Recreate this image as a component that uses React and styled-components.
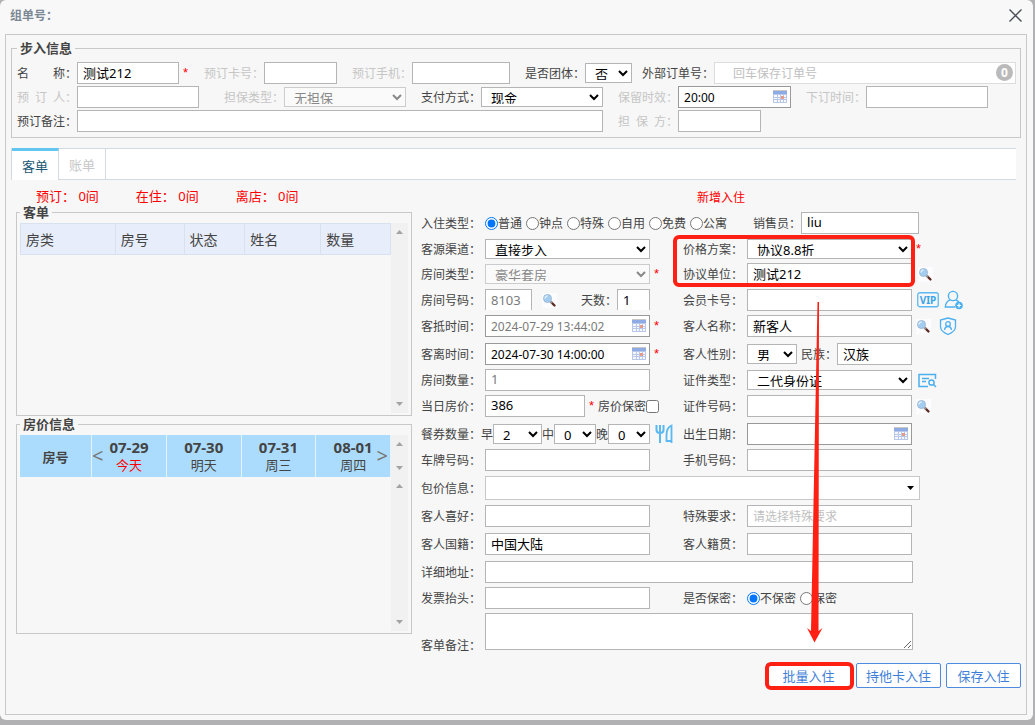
import React from "react";
import styled, { createGlobalStyle } from "styled-components";

const GUEST_COLUMNS = [
  { name: "房类", width: 95 },
  { name: "房号", width: 69 },
  { name: "状态", width: 61 },
  { name: "姓名", width: 76 },
  { name: "数量", width: 70 },
];

const PRICE_DAYS = [
  { date: "07-29", day: "今天", today: true },
  { date: "07-30", day: "明天" },
  { date: "07-31", day: "周三" },
  { date: "08-01", day: "周四" },
];

const STAY_TYPES = ["普通", "钟点", "特殊", "自用", "免费", "公寓"];

const SearchIcon = () => (
  <svg width="15" height="15" viewBox="0 0 15 15" aria-hidden="true">
    <rect width="15" height="15" fill="#fcfcfe" />
    <path d="M9 9L12.500 12.500" stroke="#5e2a22" strokeWidth="2.4" strokeLinecap="round" />
    <path d="M8 8l2 2" stroke="#9a9a9a" strokeWidth="2" />
    <circle cx="5.5" cy="5.5" r="4" fill="#a4ccef" stroke="#9dbbd8" strokeWidth="1" />
    <path d="M3 5.5a2.6 2.6 0 0 1 2.6-2.6" fill="none" stroke="#e6f3fd" strokeWidth="1.4" />
  </svg>
);

const CalendarIcon = () => (
  <svg width="14" height="13" viewBox="0 0 14 13" aria-hidden="true">
    <rect width="14" height="13" fill="#b9c8e8" />
    <rect x="0" y="0" width="14" height="1" fill="#c9c6c4" />
    <rect x="0" y="1" width="14" height="3" fill="#8eabe6" />
    <path d="M1 5h3v2H1zM5 5h2v2H5zM8 5h2v2H8zM11 5h2v2h-2zM1 8h3v1H1zM5 8h2v1H5zM11 8h2v1h-2zM1 10h3v2H1zM5 10h2v2H5zM8 10h2v2H8zM11 10h2v2h-2z" fill="#f6f8fd" />
    <rect x="8" y="6" width="3" height="3" fill="#e89a88" />
  </svg>
);

const ForkKnifeIcon = () => (
  <svg width="19" height="20" viewBox="0 0 19 20" fill="none" stroke="#5bb8f0" aria-hidden="true">
    <path d="M1.500 1v5q0 3 3.500 3t3.500-3V1M5 1v18" strokeWidth="2" />
    <path d="M16.500 19V1.500q-5 2-5 10V17h5" strokeWidth="1.800" />
  </svg>
);

const VipIcon = () => (
  <svg width="22" height="16" viewBox="0 0 22 16" aria-hidden="true">
    <rect x="0.750" y="0.750" width="20.500" height="14" rx="2" fill="none" stroke="#5bb8f0" strokeWidth="1.300" />
    <text x="11" y="11.500" textAnchor="middle" fontSize="10" fontWeight="700" fontFamily="Noto Sans, sans-serif" fill="#3aa5ea">
      VIP
    </text>
  </svg>
);

const AddMemberIcon = () => (
  <svg width="20" height="20" viewBox="0 0 20 20" fill="none" stroke="#4bb0f0" strokeWidth="1.400" aria-hidden="true">
    <circle cx="9" cy="6" r="4.600" />
    <path d="M6 9.800C3 11 1.500 13.500 1.300 17H11M12 9.800l3 2" />
    <circle cx="15" cy="15.500" r="3.800" fill="#4bb0f0" stroke="none" />
    <path d="M15 13.500v4M13 15.500h4" stroke="#fff" strokeWidth="1.200" />
  </svg>
);

const ShieldIcon = () => (
  <svg width="18" height="18" viewBox="0 0 18 18" fill="none" stroke="#4bb0f0" strokeWidth="1.300" aria-hidden="true">
    <path d="M9 1L16.500 3v6.500q0 5-7.500 8Q1.500 14.500 1.500 9.500V3z" />
    <circle cx="9" cy="7" r="2.300" />
    <path d="M5.500 13q.4-3.500 3.500-3.500t3.500 3.500" />
  </svg>
);

const IdCardIcon = () => (
  <svg width="19" height="15" viewBox="0 0 19 15" fill="none" stroke="#4bb0f0" strokeWidth="1.500" aria-hidden="true">
    <path d="M10 13.500H1V1.500h16.500V6M4 5.500h7M4 8.500h4" />
    <circle cx="13.500" cy="9.500" r="2.600" />
    <path d="M15.500 11.500l2.500 2.500" />
  </svg>
);

function ScrollTrack() {
  return (
    <Track aria-hidden="true">
      <svg width="7" height="4" viewBox="0 0 7 4">
        <path d="M0 4L3.500 0L7 4z" fill="#a3a3a3" />
      </svg>
      <svg width="7" height="4" viewBox="0 0 7 4">
        <path d="M0 0L3.500 4L7 0z" fill="#a3a3a3" />
      </svg>
    </Track>
  );
}

/** Text box with a calendar picker button at its right end. */
function DateField({ id, value = "", width = 165, muted = false }) {
  return (
    <DateBox $width={width}>
      <TextInput id={id} defaultValue={value} $size={12} $dark $muted={muted} />
      <PickerButton type="button" aria-label="选择日期">
        <CalendarIcon />
      </PickerButton>
    </DateBox>
  );
}

function LookupButton({ label = "查找" }) {
  return (
    <IconButton type="button" aria-label={label}>
      <SearchIcon />
    </IconButton>
  );
}

function WalkInInfo() {
  return (
    <Group>
      <Legend>步入信息</Legend>
      <Rows>
        <Row>
          <Label htmlFor="name">名　　称：</Label>
          <TextInput id="name" defaultValue="测试212" $width={102} />
          <NameMark>*</NameMark>
          <Label htmlFor="bookCard" $off>预订卡号：</Label>
          <TextInput id="bookCard" $width={73} />
          <Space $width={15} />
          <Label htmlFor="bookPhone" $off>预订手机：</Label>
          <TextInput id="bookPhone" $width={98} />
          <Space $width={15} />
          <Label htmlFor="isGroup">是否团体：</Label>
          <Select id="isGroup" $width={47}><option>否</option></Select>
          <Space $width={10} />
          <Label htmlFor="outerOrder">外部订单号：</Label>
          <OrderBox>
            <OrderInput id="outerOrder" placeholder="回车保存订单号" />
            <OrderCount>0</OrderCount>
          </OrderBox>
        </Row>
        <Row>
          <Label htmlFor="booker" $off>{"预\u2002订\u2002人："}</Label>
          <TextInput id="booker" $width={122} />
          <Space $width={25} />
          <Label htmlFor="guarantee" $off>担保类型：</Label>
          <Select id="guarantee" $width={122} disabled><option>无担保</option></Select>
          <Space $width={15} />
          <Label htmlFor="payment">支付方式：</Label>
          <Select id="payment" $width={122}><option>现金</option></Select>
          <Space $width={15} />
          <Label htmlFor="keepUntil" $off>保留时效：</Label>
          <DateField id="keepUntil" value="20:00" width={113} />
          <Space $width={15} />
          <Label htmlFor="bookTime" $off>下订时间：</Label>
          <TextInput id="bookTime" $width={122} />
        </Row>
        <Row>
          <Label htmlFor="bookNote">预订备注：</Label>
          <TextInput id="bookNote" $width={526} />
          <Space $width={15} />
          <Label htmlFor="guarantor" $off>{"担\u2002保\u2002方："}</Label>
          <TextInput id="guarantor" $width={83} />
        </Row>
      </Rows>
    </Group>
  );
}

function RoomPanels() {
  return (
    <Side>
      <Stats>
        <span>预订： 0间</span>
        <span>在住： 0间</span>
        <span>离店： 0间</span>
      </Stats>
      <PanelGroup>
        <Legend>客单</Legend>
        <GuestPanel>
          <GuestTable>
            <thead>
              <tr>
                {GUEST_COLUMNS.map((column) => (
                  <GuestHead key={column.name} $width={column.width}>{column.name}</GuestHead>
                ))}
              </tr>
            </thead>
          </GuestTable>
          <ScrollTrack />
        </GuestPanel>
      </PanelGroup>
      <PanelGroup>
        <Legend>房价信息</Legend>
        <PricePanel>
          <PriceHeader>
            <PriceTable>
              <thead>
                <tr>
                  <PriceHead $width={72}>房号</PriceHead>
                  {PRICE_DAYS.map(({ date, day, today }) => (
                    <PriceHead key={date} $width={75}>
                      <PriceDate>{date}</PriceDate>
                      <PriceDay $today={today}>{day}</PriceDay>
                    </PriceHead>
                  ))}
                </tr>
              </thead>
            </PriceTable>
            <PageButton type="button" $side="left">&lt;</PageButton>
            <PageButton type="button" $side="right">&gt;</PageButton>
            <ScrollTrack />
          </PriceHeader>
          <PriceBody>
            <ScrollTrack />
          </PriceBody>
        </PricePanel>
      </PanelGroup>
    </Side>
  );
}

function CheckInForm() {
  return (
    <Form>
      <NewCheckIn href="#new">新增入住</NewCheckIn>
      <FieldGrid>
        <Label as="span">入住类型：</Label>
        <Cell $span={3} $gap={4}>
          {STAY_TYPES.map((type, index) => (
            <Choice key={type}>
              <input type="radio" name="stayType" defaultChecked={index === 0} />
              <span>{type}</span>
            </Choice>
          ))}
          <SellerLabel htmlFor="seller">销售员：</SellerLabel>
          <TextInput id="seller" defaultValue="liu" $width={118} />
        </Cell>

        <Label htmlFor="channel">客源渠道：</Label>
        <Cell>
          <Select id="channel" $width={165}><option>直接步入</option></Select>
        </Cell>
        <Label htmlFor="pricePlan">价格方案：</Label>
        <Cell $gap={4}>
          <Select id="pricePlan" $width={165}><option>协议8.8折</option></Select>
          <Mark>*</Mark>
        </Cell>

        <Label htmlFor="roomType">房间类型：</Label>
        <Cell $gap={4}>
          <Select id="roomType" $width={165} disabled><option>豪华套房</option></Select>
          <Mark>*</Mark>
        </Cell>
        <Label htmlFor="company">协议单位：</Label>
        <Cell $gap={6}>
          <TextInput id="company" defaultValue="测试212" $width={165} />
          <LookupButton />
        </Cell>

        <Label htmlFor="roomNo">房间号码：</Label>
        <Cell>
          <ShortInput id="roomNo" defaultValue="8103" $width={47} $muted />
          <Space $width={10} />
          <LookupButton />
          <Space $width={24} />
          <Label htmlFor="days">天数：</Label>
          <ShortInput id="days" defaultValue="1" $width={33} />
        </Cell>
        <Label htmlFor="memberCard">会员卡号：</Label>
        <Cell $gap={5}>
          <TextInput id="memberCard" $width={165} />
          <IconButton type="button" aria-label="会员"><VipIcon /></IconButton>
          <IconButton type="button" aria-label="新增会员"><AddMemberIcon /></IconButton>
        </Cell>

        <Label htmlFor="arrive">客抵时间：</Label>
        <Cell $gap={4}>
          <DateField id="arrive" value="2024-07-29 13:44:02" muted />
          <Mark>*</Mark>
        </Cell>
        <Label htmlFor="guestName">客人名称：</Label>
        <Cell $gap={4}>
          <TextInput id="guestName" defaultValue="新客人" $width={165} />
          <LookupButton />
          <Space $width={0} />
          <IconButton type="button" aria-label="实名认证"><ShieldIcon /></IconButton>
        </Cell>

        <Label htmlFor="leave">客离时间：</Label>
        <Cell $gap={4}>
          <DateField id="leave" value="2024-07-30 14:00:00" />
          <Mark>*</Mark>
        </Cell>
        <Label htmlFor="gender">客人性别：</Label>
        <Cell>
          <Select id="gender" $width={50}><option>男</option></Select>
          <Space $width={4} />
          <Label htmlFor="nation">民族：</Label>
          <TextInput id="nation" defaultValue="汉族" $width={75} />
        </Cell>

        <Label htmlFor="roomCount">房间数量：</Label>
        <Cell>
          <TextInput id="roomCount" defaultValue="1" $width={165} $muted />
        </Cell>
        <Label htmlFor="idType">证件类型：</Label>
        <Cell $gap={6}>
          <Select id="idType" $width={165}><option>二代身份证</option></Select>
          <IconButton type="button" aria-label="读取证件"><IdCardIcon /></IconButton>
        </Cell>

        <Label htmlFor="price">当日房价：</Label>
        <Cell $gap={4}>
          <TextInput id="price" defaultValue="386" $width={100} />
          <Mark>*</Mark>
          <Choice>
            <span>房价保密</span>
            <input type="checkbox" />
          </Choice>
        </Cell>
        <Label htmlFor="idNo">证件号码：</Label>
        <Cell $gap={4}>
          <TextInput id="idNo" $width={165} />
          <LookupButton />
        </Cell>

        <Cell $span={2}>
          <Label as="span">餐券数量：</Label>
          <Label htmlFor="breakfast">早</Label>
          <Select id="breakfast" $width={49}><option>2</option></Select>
          <Label htmlFor="lunch">中</Label>
          <Select id="lunch" $width={42}><option>0</option></Select>
          <Label htmlFor="dinner">晚</Label>
          <Select id="dinner" $width={42}><option>0</option></Select>
          <Space $width={5} />
          <IconButton type="button" aria-label="餐券"><ForkKnifeIcon /></IconButton>
        </Cell>
        <Label htmlFor="birthday">出生日期：</Label>
        <Cell>
          <DateField id="birthday" />
        </Cell>

        <Label htmlFor="plate">车牌号码：</Label>
        <Cell><TextInput id="plate" $width={165} /></Cell>
        <Label htmlFor="mobile">手机号码：</Label>
        <Cell><TextInput id="mobile" $width={165} /></Cell>

        <Label htmlFor="package">包价信息：</Label>
        <Cell $span={3}>
          <PackageBox>
            <PackageSelect id="package"><option> </option></PackageSelect>
            <svg width="7" height="4" viewBox="0 0 7 4" aria-hidden="true">
              <path d="M0 0h7L3.500 4z" fill="#000" />
            </svg>
          </PackageBox>
        </Cell>

        <Label htmlFor="hobby">客人喜好：</Label>
        <Cell><TextInput id="hobby" $width={165} /></Cell>
        <Label htmlFor="request">特殊要求：</Label>
        <Cell><TextInput id="request" placeholder="请选择特殊要求" $width={165} $size={12} /></Cell>

        <Label htmlFor="country">客人国籍：</Label>
        <Cell><TextInput id="country" defaultValue="中国大陆" $width={165} /></Cell>
        <Label htmlFor="hometown">客人籍贯：</Label>
        <Cell><TextInput id="hometown" $width={165} /></Cell>

        <Label htmlFor="address">详细地址：</Label>
        <Cell $span={3}><TextInput id="address" $width={428} /></Cell>

        <Label htmlFor="invoice">发票抬头：</Label>
        <Cell><TextInput id="invoice" $width={165} /></Cell>
        <Label as="span">是否保密：</Label>
        <Cell $gap={4}>
          <Choice>
            <input type="radio" name="secret" defaultChecked />
            <span>不保密</span>
          </Choice>
          <Choice>
            <input type="radio" name="secret" />
            <span>保密</span>
          </Choice>
        </Cell>

        <NoteLabel htmlFor="note">客单备注：</NoteLabel>
        <Note id="note" />
      </FieldGrid>
      <Highlight />
      <Pointer width="18" height="341" viewBox="0 0 18 341" aria-hidden="true">
        <path d="M11.500 0H13L12.500 329L16.500 326L8.500 340.500L1 326L5 329z" fill="#ff2014" />
      </Pointer>
    </Form>
  );
}

function App() {
  return (
    <>
      <GlobalStyle />
      <Dialog>
        <Header>
          <Title>组单号：</Title>
          <CloseButton type="button" aria-label="关闭">
            <svg width="13" height="13" viewBox="0 0 13 13">
              <path d="M0.500 0.500l12 12M12.500 0.500l-12 12" stroke="#4a4d55" strokeWidth="1.400" />
            </svg>
          </CloseButton>
        </Header>
        <Frame>
          <WalkInInfo />
          <Tabs>
            <Tab type="button" $active>客单</Tab>
            <Tab type="button">账单</Tab>
          </Tabs>
          <Content>
            <RoomPanels />
            <CheckInForm />
          </Content>
          <Actions>
            <MarkedAction>
              <ActionButton type="button" $width={85}>批量入住</ActionButton>
            </MarkedAction>
            <ActionButton type="button" $width={85}>持他卡入住</ActionButton>
            <ActionButton type="button" $width={75}>保存入住</ActionButton>
          </Actions>
        </Frame>
      </Dialog>
    </>
  );
}

const GlobalStyle = createGlobalStyle`
  * {
    box-sizing: border-box;
  }

  body {
    margin: 0;
    background: #b1b1b4;
    color: #444;
    font-family: "Noto Sans", "Noto Sans CJK SC", sans-serif;
    font-size: 12px;
  }

  button, input, select, textarea {
    margin: 0;
    font-family: inherit;
  }
`;

const Dialog = styled.main`
  margin: 0 2px 4px 0;
  padding: 0 6px 5px 5px;
  border-radius: 6px;
  background: #f8f8f9;
`;

const Header = styled.header`
  display: flex;
  align-items: center;
  justify-content: space-between;
  height: 34px;
  padding: 0 5px 4px;
`;

const Title = styled.h1`
  margin: 0;
  color: #7a8794;
  font-size: 12px;
  font-weight: 700;
`;

const CloseButton = styled.button`
  display: flex;
  padding: 0;
  border: 0;
  background: none;
`;

const Frame = styled.section`
  padding: 5px 5px 26px;
  border: 1px solid #c8c8c8;
  background: #f7f7f7;
`;

const Group = styled.fieldset`
  min-width: 0;
  margin: 0;
  padding: 6px 4px 5px 5px;
  border: 1px solid #c8c8c8;
`;

const Legend = styled.legend`
  padding: 0 3px;
  font-size: 13px;
  font-weight: 700;
  line-height: 16px;
`;

const Rows = styled.div`
  display: flex;
  flex-direction: column;
  gap: 2px;
`;

const Row = styled.div`
  display: flex;
  align-items: center;
  height: 22px;
`;

const Label = styled.label`
  flex: none;
  padding-top: 2px;
  color: ${({ $off }) => ($off ? "#c6c6c6" : "#444")};
  font-size: 12px;
  line-height: 20px;
  white-space: nowrap;
`;

const Space = styled.span`
  flex: none;
  width: ${({ $width }) => $width}px;
`;

const Mark = styled.span`
  color: #f00;
  font-family: "Liberation Sans", sans-serif;
  font-size: 13px;
  line-height: 22px;
`;

const NameMark = styled(Mark)`
  width: 25px;
  padding-left: 4px;
`;

const TextInput = styled.input`
  flex: none;
  width: ${({ $width }) => ($width ? `${$width}px` : "100%")};
  height: 22px;
  padding: 0 5px ${({ $size = 13 }) => ($size === 13 ? 2 : 0)}px;
  border: 1px solid ${({ $dark }) => ($dark ? "#999" : "#b5b5b5")};
  border-radius: 0;
  background: #fff;
  color: ${({ $muted }) => ($muted ? "#7a7a7a" : "#000")};
  font-size: ${({ $size = 13 }) => $size}px;

  &::placeholder {
    color: #c0c0c0;
  }
`;

const ShortInput = styled(TextInput)`
  align-self: flex-start;
  height: 21px;
  padding-bottom: 0;
  border-bottom: 0;
`;

const Select = styled.select`
  flex: none;
  width: ${({ $width }) => $width}px;
  height: 20px;
  padding: 0 0 2px 5px;
  border: 1px solid #b5b5b5;
  border-radius: 0;
  background-color: #fff;
  color: #000;
  font-size: 13px;

  &:disabled {
    border-color: #ccc;
    background-color: #fafafa;
    color: #888;
    opacity: 1;
  }
`;

const DateBox = styled.div`
  position: relative;
  flex: none;
  width: ${({ $width }) => $width}px;
  height: 22px;
`;

const PickerButton = styled.button`
  position: absolute;
  top: 4px;
  right: 4px;
  display: flex;
  padding: 0;
  border: 0;
  background: none;
`;

const IconButton = styled.button`
  display: flex;
  flex: none;
  padding: 0;
  border: 0;
  background: none;
`;

const OrderBox = styled.div`
  position: relative;
  flex: 1;
`;

const OrderInput = styled(TextInput)`
  padding: 0 5px 0 18px;
  border-color: #ddd;
  font-size: 12px;
`;

const OrderCount = styled.span`
  position: absolute;
  top: 2px;
  right: 3px;
  width: 17px;
  height: 17px;
  border-radius: 50%;
  background: #bababa;
  color: #fff;
  font-size: 12px;
  font-weight: 700;
  line-height: 17px;
  text-align: center;
`;

const Tabs = styled.nav`
  display: flex;
  height: 32px;
  margin: 10px 5px 0 0;
  border: 1px solid #d3dae0;
  border-right: 0;
  background: #fff;
`;

const Tab = styled.button`
  width: 47px;
  height: ${({ $active }) => ($active ? 32 : 30)}px;
  margin-top: ${({ $active }) => ($active ? -1 : 0)}px;
  padding: 0;
  border: 0;
  border-top: ${({ $active }) => ($active ? "3px solid #62c6f2" : "0")};
  border-right: 1px solid #d3dae0;
  background: #fff;
  color: ${({ $active }) => ($active ? "#1b5876" : "#c8c8c8")};
  font-size: 13px;
`;

const Content = styled.div`
  display: flex;
  align-items: flex-start;
  gap: 9px;
  padding: 8px 0 0 5px;
`;

const Side = styled.div`
  flex: none;
  width: 396px;
`;

const Stats = styled.div`
  display: flex;
  gap: 37px;
  padding-left: 20px;
  color: #f00;
  font-size: 13px;
  line-height: 16px;
`;

const PanelGroup = styled(Group)`
  padding: 3px 3px 2px;
`;

const GuestPanel = styled.div`
  display: flex;
  align-items: stretch;
  height: 190px;
`;

const GuestTable = styled.table`
  flex: 1;
  align-self: flex-start;
  border-collapse: collapse;
  table-layout: fixed;
`;

const GuestHead = styled.th`
  width: ${({ $width }) => $width}px;
  height: 31px;
  padding: 0 5px;
  border: 1px solid #d8e1ee;
  background: #e7edfa;
  font-size: 14px;
  font-weight: 400;
  text-align: left;
`;

const Track = styled.div`
  display: flex;
  flex: none;
  flex-direction: column;
  align-items: center;
  justify-content: space-between;
  width: 17px;
  padding: 7px 0;
  background: #f1f1f1;
`;

const PricePanel = styled.div`
  display: flex;
  flex-direction: column;
  height: 196px;
`;

const PriceHeader = styled.div`
  position: relative;
  display: flex;
  height: 42px;
`;

const PriceTable = styled.table`
  flex: 1;
  border-collapse: collapse;
  table-layout: fixed;
`;

const PriceHead = styled.th`
  width: ${({ $width }) => $width}px;
  height: 42px;
  padding: 0;
  border-right: 1px solid #e4f3fd;
  background: #acdcfd;
  font-size: 13px;
`;

const PriceDate = styled.div`
  font-size: 15px;
  line-height: 18px;
`;

const PriceDay = styled.div`
  color: ${({ $today }) => ($today ? "#f00" : "#444")};
  font-weight: 400;
  line-height: 18px;
`;

const PageButton = styled.button`
  position: absolute;
  top: 9px;
  ${({ $side }) => ($side === "left" ? "left: 72px" : "right: 20px")};
  padding: 0;
  border: 0;
  background: none;
  color: #777;
  font-size: 20px;
  line-height: 24px;
`;

const PriceBody = styled.div`
  display: flex;
  flex: 1;
  justify-content: flex-end;
`;

const Form = styled.form`
  position: relative;
  flex: 1;
  min-width: 0;
`;

const NewCheckIn = styled.a`
  display: block;
  width: max-content;
  margin: 0 0 4px 276px;
  color: #f00;
  line-height: 20px;
  text-decoration: none;
`;

const FieldGrid = styled.div`
  display: grid;
  grid-template-columns: 64px 198px 64px 1fr;
  grid-template-rows:
    26px 25px 26px 26px 28px 26px 26px 28px
    26px 28px 28px 28px 28px 26px 26px 43px;
`;

const Cell = styled.div`
  display: flex;
  grid-column: span ${({ $span = 1 }) => $span};
  align-items: center;
  gap: ${({ $gap = 0 }) => $gap}px;
  height: 22px;
`;

const Choice = styled.label`
  display: flex;
  flex: none;
  align-items: center;

  input {
    width: 13px;
    height: 13px;
  }

  span {
    padding-top: 2px;
    line-height: 20px;
  }
`;

const SellerLabel = styled(Label)`
  margin: 0 -4px 0 22px;
`;

const PackageBox = styled.div`
  position: relative;
  width: 435px;
  height: 24px;

  svg {
    position: absolute;
    top: 10px;
    right: 6px;
  }
`;

const PackageSelect = styled.select`
  width: 100%;
  height: 24px;
  border: 1px solid #c8c8c8;
  border-radius: 0;
  background: #fff;
  appearance: none;
`;

const NoteLabel = styled(Label)`
  align-self: end;
`;

const Note = styled.textarea`
  grid-column: span 3;
  width: 428px;
  height: 37px;
  border: 1px solid #b5b5b5;
`;

const Highlight = styled.div`
  position: absolute;
  top: 47px;
  left: 252px;
  width: 242px;
  height: 52px;
  border: 4px solid #ff2014;
  border-radius: 6px;
  pointer-events: none;
`;

const Pointer = styled.svg`
  position: absolute;
  top: 114px;
  left: 385px;
  pointer-events: none;
`;

const Actions = styled.footer`
  display: flex;
  justify-content: flex-end;
  gap: 5px;
  margin-top: 7px;
`;

const MarkedAction = styled.div`
  position: relative;

  &::after {
    content: "";
    position: absolute;
    inset: -1px -3px -2px -1px;
    border: 4px solid #ff2014;
    border-radius: 6px;
    pointer-events: none;
  }
`;

const ActionButton = styled.button`
  width: ${({ $width }) => $width}px;
  height: 25px;
  padding: 0;
  border: 1px solid #4c8be0;
  border-radius: 2px;
  background: #fff;
  color: #3f7fd8;
  font-size: 13px;
`;

export default App;
